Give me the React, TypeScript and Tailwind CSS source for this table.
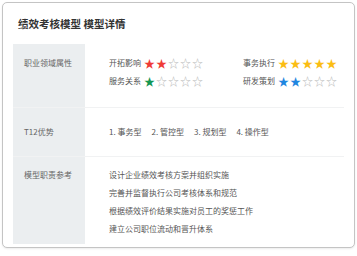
import React from 'react';

type Rating = { label: string; value: number; color: string };

const ratings: Rating[][] = [
  [
    { label: '开拓影响', value: 2, color: 'text-[#ef3b36]' },
    { label: '事务执行', value: 5, color: 'text-[#fbbd13]' },
  ],
  [
    { label: '服务关系', value: 1, color: 'text-[#139653]' },
    { label: '研发策划', value: 2, color: 'text-[#1f86e0]' },
  ],
];

const duties = [
  '设计企业绩效考核方案并组织实施',
  '完善并监督执行公司考核体系和规范',
  '根据绩效评价结果实施对员工的奖惩工作',
  '建立公司职位流动和晋升体系',
];

const Stars = ({ value, color }: { value: number; color: string }) => (
  <span className="ml-[3px] flex items-center gap-[1px]">
    {[0, 1, 2, 3, 4].map((i) => (
      <span
        key={i}
        className={`w-[11px] text-center text-[11px] leading-none ${i < value ? color : 'text-[#b8b8b8]'}`}
      >
        {i < value ? '★' : '☆'}
      </span>
    ))}
  </span>
);

const App: React.FC = () => {
  return (
    <div
      className="h-[256px] w-[357px] overflow-hidden bg-white p-[2px]"
      style={{ fontFamily: '"Noto Sans CJK SC", "Noto Sans", sans-serif' }}
    >
      <div className="h-[246px] rounded-[5px] border border-[#c4c4c4] bg-white px-[10px] shadow-[0_1px_2px_rgba(0,0,0,0.08)]">
        <div className="flex h-[41px] items-center pl-[5px] pt-[1px] text-[10.5px] font-bold text-[#333]">
          绩效考核模型 模型详情
        </div>

        <div className="text-[8px] leading-[18px]">
          <div className="flex border-b border-[#f1f2f3]">
            <div className="w-[72px] shrink-0 bg-[#ebeef0] pl-[11px] pt-[10px] text-[#666]">职业领域属性</div>
            <div className="min-w-0 flex-1 pl-[24px] pt-[10px] pb-[17px] text-[#555]">
              {ratings.map((row, r) => (
                <div key={r} className="flex">
                  {row.map((item, c) => (
                    <div key={item.label} className={`flex items-center ${c === 0 ? 'w-[134px]' : ''}`}>
                      <span>{item.label}</span>
                      <Stars value={item.value} color={item.color} />
                    </div>
                  ))}
                </div>
              ))}
            </div>
          </div>

          <div className="flex border-b border-[#f1f2f3]">
            <div className="w-[72px] shrink-0 bg-[#ebeef0] pl-[11px] pt-[15px] text-[#666]">T12优势</div>
            <div className="flex flex-1 gap-[10px] pl-[24px] pt-[15px] pb-[15px] text-[#555]">
              <span>1. 事务型</span>
              <span>2. 管控型</span>
              <span>3. 规划型</span>
              <span>4. 操作型</span>
            </div>
          </div>

          <div className="flex">
            <div className="w-[72px] shrink-0 bg-[#ebeef0] pl-[11px] pt-[9px] text-[#666]">模型职责参考</div>
            <div className="flex-1 pl-[24px] pt-[9px] pb-[6px] text-[#555]">
              {duties.map((d) => (
                <div key={d}>{d}</div>
              ))}
            </div>
          </div>
        </div>
      </div>
    </div>
  );
};

export default App;
